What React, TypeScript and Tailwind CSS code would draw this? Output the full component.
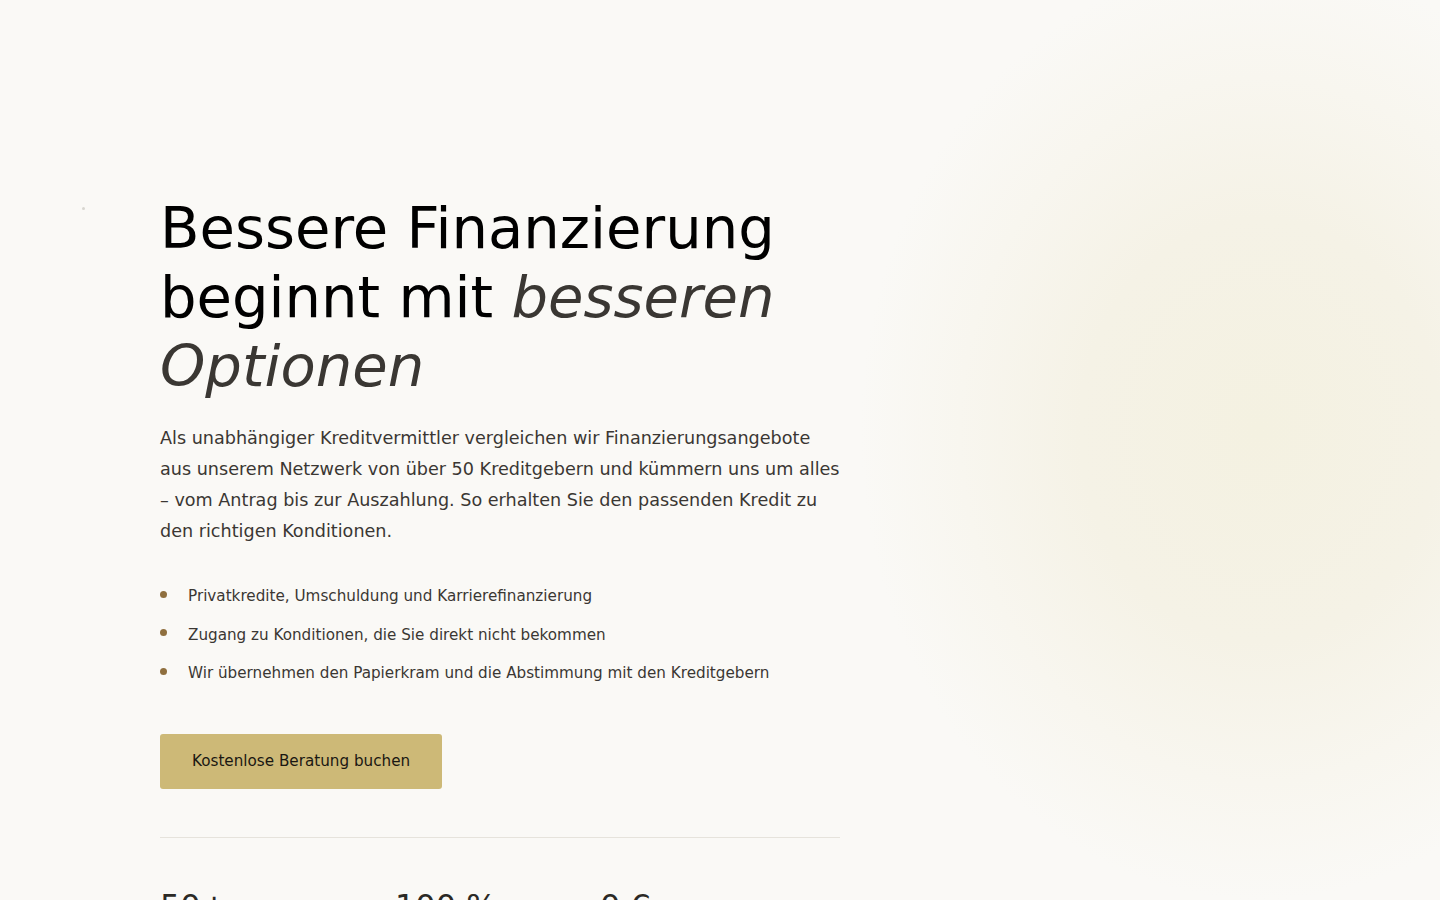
const bullets = [
  "Privatkredite, Umschuldung und Karrierefinanzierung",
  "Zugang zu Konditionen, die Sie direkt nicht bekommen",
  "Wir übernehmen den Papierkram und die Abstimmung mit den Kreditgebern",
];

const stats = [
  { value: "50+", label: "Kreditgeber im Netzwerk" },
  { value: "100 %", label: "Digitaler Ablauf" },
  { value: "0 €", label: "Beratungskosten" },
];

export default function App() {
  return (
    <div className="relative min-h-screen w-full overflow-hidden bg-[#faf9f6] font-['DejaVu_Sans',sans-serif]">
      {/* soft glow on the right */}
      <div className="pointer-events-none absolute left-[860px] top-[-40px] h-[940px] w-[800px] rounded-full bg-[radial-gradient(closest-side,#f4f1e1_0%,#f5f2e6_45%,#f8f6ef_75%,rgba(250,249,246,0)_100%)]" />
      <div className="pointer-events-none absolute left-[82px] top-[207px] h-[3px] w-[3px] rounded-full bg-[#d8d6d0]" />

      <main className="relative pl-[160px] pt-[194px]">
        <div className="w-[680px]">
          <h1 className="text-[57.6px] font-normal leading-[69px] text-black">
            Bessere Finanzierung beginnt mit{" "}
            <em className="italic text-[#3a3733]">besseren Optionen</em>
          </h1>

          <p className="mt-[22px] text-[17.6px] leading-[31px] text-[#3a3733]">
            Als unabhängiger Kreditvermittler vergleichen wir Finanzierungsangebote aus unserem
            Netzwerk von über 50 Kreditgebern und kümmern uns um alles – vom Antrag bis zur
            Auszahlung. So erhalten Sie den passenden Kredit zu den richtigen Konditionen.
          </p>

          <ul className="mt-[37px] flex flex-col gap-[14.5px]">
            {bullets.map((b) => (
              <li key={b} className="flex items-center gap-[21px] text-[15.2px] leading-[24px] text-[#3a3733]">
                <span className="h-[7px] w-[7px] shrink-0 -translate-y-[2px] rounded-full bg-[#8f6f3e]" />
                {b}
              </li>
            ))}
          </ul>

          <button className="mt-[49px] h-[55px] rounded-[3px] bg-[#cdb977] px-8 text-[15.2px] text-[#1a1712]">
            Kostenlose Beratung buchen
          </button>

          <div className="mt-12 border-t border-[#e6e3dc]" />

          <div className="flex pt-[48px]">
            {stats.map((s, i) => (
              <div key={s.value} className={i === 0 ? "w-[235px]" : i === 1 ? "w-[205px]" : ""}>
                <div className="text-[32px] leading-[40px] text-[#2b2925]">{s.value}</div>
                <div className="mt-2 text-[14px] text-[#6b675f]">{s.label}</div>
              </div>
            ))}
          </div>
        </div>
      </main>
    </div>
  );
}
